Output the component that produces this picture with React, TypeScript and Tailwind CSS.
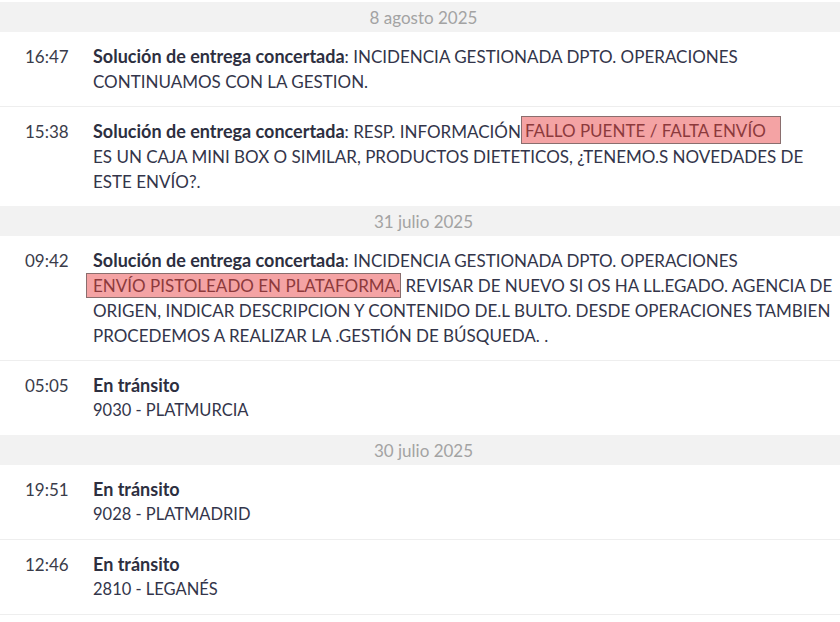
import React from 'react';

function DateHeader({ label }: { label: string }) {
  return (
    <div className="h-[30px] bg-[#f2f2f2] flex items-center justify-center pl-[7px] text-[17px] text-[#a3a3a3]">
      {label}
    </div>
  );
}

function Row({
  time,
  title,
  children,
  border = true,
}: {
  time: string;
  title: string;
  children: React.ReactNode;
  border?: boolean;
}) {
  return (
    <div className={`flex pl-[25px] pr-[2px] py-[12px] ${border ? 'border-b border-[#eeeeee]' : ''}`}>
      <div className="w-[68px] shrink-0 text-[#3a3c4a]">{time}</div>
      <div className="flex-1 text-[#33354a]">
        <span className="font-bold text-[18px] text-[#2d2f3f]">{title}</span>
        {children}
      </div>
    </div>
  );
}

function Transit({ time, place, border = true }: { time: string; place: string; border?: boolean }) {
  return (
    <div className={`flex pl-[25px] pt-[12px] pb-[12px] ${border ? 'border-b border-[#eeeeee]' : ''}`}>
      <div className="w-[68px] shrink-0 text-[#3a3c4a]">{time}</div>
      <div className="flex-1 text-[#33354a]">
        <div className="font-bold text-[18px] text-[#2d2f3f]">En tránsito</div>
        <div className="text-[16.5px]">{place}</div>
      </div>
    </div>
  );
}

function Mark({ children, className }: { children: React.ReactNode; className: string }) {
  return (
    <span
      className={`inline-block align-top whitespace-nowrap bg-[#f4a3a4] border border-[#8a6e6e] text-[#8c3a3c] ${className}`}
    >
      {children}
    </span>
  );
}

export default function App() {
  return (
    <div
      className="w-[840px] h-[622px] bg-white overflow-hidden pt-[2px] text-[17px] leading-[25px]"
      style={{ fontFamily: 'Lato, "Open Sans", sans-serif' }}
    >
      <DateHeader label="8 agosto 2025" />
      <Row time="16:47" title="Solución de entrega concertada">
        : INCIDENCIA GESTIONADA DPTO. OPERACIONES CONTINUAMOS CON LA GESTION.
      </Row>
      <Row time="15:38" title="Solución de entrega concertada" border={false}>
        : RESP. INFORMACIÓN
        <Mark className="h-[28px] -mt-[3px] leading-[28px] pl-[3px] w-[260px]">FALLO PUENTE / FALTA ENVÍO</Mark>
        <br />
        ES UN CAJA MINI BOX O SIMILAR, PRODUCTOS DIETETICOS, ¿TENEMO.S NOVEDADES DE ESTE ENVÍO?.
      </Row>
      <DateHeader label="31 julio 2025" />
      <Row time="09:42" title="Solución de entrega concertada">
        : INCIDENCIA GESTIONADA DPTO. OPERACIONES{' '}
        <Mark className="h-[25px] leading-[23px] -ml-[7px] pl-[6px]">ENVÍO PISTOLEADO EN PLATAFORMA.</Mark>{' '}
        REVISAR DE NUEVO SI OS HA LL.EGADO. AGENCIA DE ORIGEN, INDICAR DESCRIPCION Y CONTENIDO DE.L BULTO. DESDE
        OPERACIONES TAMBIEN PROCEDEMOS A REALIZAR LA .GESTIÓN DE BÚSQUEDA. .
      </Row>
      <Transit time="05:05" place="9030 - PLATMURCIA" border={false} />
      <DateHeader label="30 julio 2025" />
      <Transit time="19:51" place="9028 - PLATMADRID" />
      <Transit time="12:46" place="2810 - LEGANÉS" />
    </div>
  );
}
